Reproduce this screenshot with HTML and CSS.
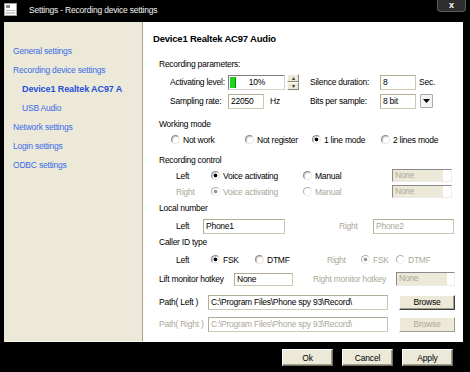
FILE: index.html
```html
<!DOCTYPE html>
<html lang="en">
<head>
  <meta charset="UTF-8">
  <meta name="viewport" content="width=device-width, initial-scale=1.0">
  <title>Settings - Recording device settings</title>
  <link rel="stylesheet" href="styles.css">
</head>
<body>
<div class="window">
  <div class="titlebar">
    <svg class="app-icon" width="13" height="13" viewBox="0 0 13 13">
      <rect x="0.5" y="0.5" width="12" height="12" fill="#fff" stroke="#a0a0a0"/>
      <rect x="2" y="2" width="4" height="3" fill="#8a8a8a"/>
      <rect x="2" y="7" width="9" height="1" fill="#b8b8b8"/>
      <rect x="2" y="9" width="9" height="2" fill="#d0d0d0"/>
    </svg>
    <span class="title">Settings - Recording device settings</span>
    <div class="close-btn">x</div>
  </div>

  <div class="client">
    <ul class="sidebar">
      <li class="nav-item">General settings</li>
      <li class="nav-item">Recording device settings</li>
      <li class="nav-item sub active">Device1 Realtek AC97 A</li>
      <li class="nav-item sub">USB Audio</li>
      <li class="nav-item">Network settings</li>
      <li class="nav-item">Login settings</li>
      <li class="nav-item">ODBC settings</li>
    </ul>

    <div class="panel">
      <div class="panel-title">Device1 Realtek AC97 Audio</div>

      <div class="group-title mt-10">Recording parameters:</div>
      <div class="params-row mt-2">
        <span>Activating level:</span>
        <div class="level-cell">
          <div class="level-box"><span class="level-bar"></span><span class="level-text">10%</span></div>
          <div class="spin">
            <span class="spin-btn">&#9652;</span>
            <span class="spin-btn">&#9662;</span>
          </div>
        </div>
        <span>Silence duration:</span>
        <div class="input">8</div>
        <span class="unit">Sec.</span>
      </div>
      <div class="params-row mt-3">
        <span>Sampling rate:</span>
        <div class="level-cell">
          <div class="input rate">22050</div>
          <span class="unit hz">Hz</span>
        </div>
        <span>Bits per sample:</span>
        <div class="input">8 bit</div>
        <span class="drop-btn"><svg width="7" height="4" viewBox="0 0 7 4"><path d="M0 0h7L3.5 4z" fill="#000"/></svg></span>
      </div>

      <div class="group-title mt-8">Working mode</div>
      <div class="mode-row">
        <label class="opt"><span class="radio"></span>Not work</label>
        <label class="opt"><span class="radio"></span>Not register</label>
        <label class="opt"><span class="radio checked"></span>1 line mode</label>
        <label class="opt"><span class="radio"></span>2 lines mode</label>
      </div>

      <div class="group-title mt-6">Recording control</div>
      <div class="control-row">
        <span>Left</span>
        <label class="opt"><span class="radio checked"></span>Voice activating</label>
        <label class="opt"><span class="radio"></span>Manual</label>
        <div class="key-box"><span class="key-fill">None</span></div>
      </div>
      <div class="control-row mt-1 disabled">
        <span>Right</span>
        <label class="opt"><span class="radio checked"></span>Voice activating</label>
        <label class="opt"><span class="radio"></span>Manual</label>
        <div class="key-box"><span class="key-fill">None</span></div>
      </div>

      <div class="group-title mt-2">Local number</div>
      <div class="number-row mt-2">
        <span>Left</span>
        <div class="input">Phone1</div>
        <span class="right-label disabled">Right</span>
        <div class="input disabled">Phone2</div>
      </div>

      <div class="group-title mt-1">Caller ID type</div>
      <div class="caller-row mt-2">
        <span>Left</span>
        <label class="opt"><span class="radio checked"></span>FSK</label>
        <label class="opt"><span class="radio"></span>DTMF</label>
        <span class="disabled">Right</span>
        <label class="opt disabled"><span class="radio checked"></span>FSK</label>
        <label class="opt disabled"><span class="radio"></span>DTMF</label>
      </div>

      <div class="hotkey-row mt-4">
        <span>Lift monitor hotkey</span>
        <div class="input small">None</div>
        <span class="right-label disabled">Right monitor hotkey</span>
        <div class="key-box tall"><span class="key-fill">None</span></div>
      </div>

      <div class="path-row mt-7">
        <span>Path( Left )</span>
        <div class="input">C:\Program Files\Phone spy 93\Record\</div>
        <button class="btn">Browse</button>
      </div>
      <div class="path-row mt-6 disabled">
        <span>Path( Right )</span>
        <div class="input">C:\Program Files\Phone spy 93\Record\</div>
        <button class="btn">Browse</button>
      </div>
    </div>
  </div>

  <div class="footer">
    <button class="btn footer-btn">Ok</button>
    <button class="btn footer-btn">Cancel</button>
    <button class="btn footer-btn">Apply</button>
  </div>
</div>
</body>
</html>
```

FILE: styles.css
```css
* {
  box-sizing: border-box;
  margin: 0;
  padding: 0;
}

body {
  background-color: #000;
  width: 470px;
  height: 372px;
  overflow: hidden;
  font-family: "Liberation Sans", Arial, sans-serif;
  font-size: 8.5px;
  letter-spacing: -0.25px;
  color: #000;
}

.window {
  width: 470px;
  height: 372px;
  background-color: #000;
}

/* title bar */
.titlebar {
  display: flex;
  height: 22px;
  color: #fff;
}

.app-icon {
  margin: 3px 0 0 4px;
}

.title {
  margin: 4px 0 0 12px;
  font-size: 8.5px;
  letter-spacing: -0.2px;
  line-height: 12px;
  color: #f2f2f2;
}

.close-btn {
  margin-left: auto;
  margin-right: 4px;
  width: 29px;
  height: 12px;
  background-color: #2e2e2e;
  border: 1px solid #5c5c5c;
  border-top: none;
  border-radius: 0 0 4px 4px;
  color: #fff;
  font-weight: bold;
  font-size: 9px;
  letter-spacing: 0;
  line-height: 10px;
  text-align: center;
}

/* main area */
.client {
  display: flex;
  margin-left: 4px;
  width: 459px;
  height: 320px;
}

.sidebar {
  list-style: none;
  width: 139px;
  background-color: #ece9d8;
  border-right: 1px solid #a5a294;
  border-bottom: 1px solid #f7f5ec;
  padding-top: 20px;
  white-space: nowrap;
}

.nav-item {
  height: 19px;
  line-height: 19px;
  padding-left: 9px;
  font-size: 8.5px;
  letter-spacing: -0.2px;
  color: #3a6cea;
}

.nav-item.sub {
  padding-left: 18px;
}

.nav-item.active {
  font-weight: bold;
  font-size: 9px;
  letter-spacing: -0.1px;
  color: #1d4fdc;
}

.panel {
  flex: 1;
  background-color: #fff;
  padding-top: 9px;
  white-space: nowrap;
}

.panel-title {
  height: 16px;
  line-height: 16px;
  padding-left: 10px;
  font-weight: bold;
  font-size: 9.5px;
  letter-spacing: -0.2px;
}

.group-title {
  height: 15px;
  line-height: 15px;
  padding-left: 16px;
}

.mt-1 { margin-top: 1px; }
.mt-2 { margin-top: 2px; }
.mt-3 { margin-top: 3px; }
.mt-4 { margin-top: 4px; }
.mt-6 { margin-top: 6px; }
.mt-7 { margin-top: 7px; }
.mt-8 { margin-top: 8px; }
.mt-10 { margin-top: 10px; }

.disabled,
.disabled .input {
  color: #aca899;
}

/* controls */
.input {
  height: 15px;
  line-height: 13px;
  padding-left: 2px;
  background-color: #fff;
  border: 1px solid #cdc8b2;
  border-top-color: #b3ad94;
  border-left-color: #b3ad94;
  overflow: hidden;
}

.input.small {
  height: 13px;
  line-height: 11px;
}

.unit {
  margin-left: 3px;
}

.level-cell {
  display: flex;
  align-items: center;
}

.level-box {
  width: 57px;
  height: 15px;
  border: 1px solid #7f7f7f;
  border-right-color: #d6d3c6;
  border-bottom-color: #d6d3c6;
  background-color: #fff;
  display: flex;
}

.level-bar {
  width: 6px;
  margin: 1px 0 1px 1px;
  background-color: #1fd41f;
  border-right: 1px solid #0a8a0a;
}

.level-text {
  flex: 1;
  text-align: center;
  line-height: 13px;
  padding-right: 6px;
}

.spin {
  margin-left: 2px;
  display: flex;
  flex-direction: column;
}

.spin-btn {
  width: 12px;
  height: 8px;
  background-color: #ece9d8;
  border: 1px solid;
  border-color: #fff #8a877a #8a877a #fff;
  font-size: 6px;
  line-height: 6px;
  letter-spacing: 0;
  text-align: center;
  color: #333;
}

.input.rate {
  width: 36px;
}

.unit.hz {
  margin-left: 6px;
}

.drop-btn {
  margin-left: 4px;
  width: 13px;
  height: 14px;
  background-color: #f5f5f3;
  border: 1px solid #a9a9a9;
  border-radius: 1px;
  display: flex;
  justify-content: center;
  align-items: center;
}

.radio {
  display: inline-block;
  flex-shrink: 0;
  width: 9px;
  height: 9px;
  border-radius: 50%;
  background-color: #fff;
  border: 1px solid;
  border-color: #8d8d8d #e6e6e6 #e6e6e6 #8d8d8d;
  box-shadow: inset 1px 1px 0 #c8c8c8;
}

.radio.checked {
  background-image: radial-gradient(circle, #000 1.6px, transparent 2.2px);
}

.disabled .radio {
  border-color: #b0b0b0 #eeeeee #eeeeee #b0b0b0;
  box-shadow: none;
}

.disabled .radio.checked {
  background-image: radial-gradient(circle, #9a9a9a 1.6px, transparent 2.2px);
}

.opt {
  display: flex;
  align-items: center;
  gap: 3px;
}

.key-box {
  width: 60px;
  height: 13px;
  display: flex;
  background-color: #fff;
  border: 1px solid;
  border-color: #8a8a8a #ececec #ececec #8a8a8a;
}

.key-box.tall {
  width: 59px;
  height: 14px;
}

.key-fill {
  width: 50px;
  background-color: #ece9d8;
  padding-left: 2px;
  line-height: 11px;
  color: #aca899;
}

.btn {
  font-family: inherit;
  font-size: 8.5px;
  letter-spacing: -0.2px;
  color: #000;
  background-color: #ece9d8;
  border: 1px solid;
  border-color: #fff #404040 #404040 #fff;
  box-shadow: inset -1px -1px 0 #a19e8e;
}

.disabled .btn {
  color: #aca899;
  border-color: #fff #9e9b8c #9e9b8c #fff;
  box-shadow: none;
}

/* rows */
.params-row {
  display: grid;
  grid-template-columns: 58px 82px 70px 36px auto;
  align-items: center;
  height: 16px;
  padding-left: 27px;
}

.params-row .unit:last-child,
.params-row .drop-btn {
  justify-self: start;
}

.mode-row {
  display: grid;
  grid-template-columns: 74px 67px 69px auto;
  align-items: center;
  height: 15px;
  padding-left: 28px;
}

.control-row {
  display: grid;
  grid-template-columns: 35px 92px 89px 60px;
  align-items: center;
  height: 15px;
  padding-left: 33px;
}

.number-row {
  display: grid;
  grid-template-columns: 27px 82px 88px 81px;
  align-items: center;
  height: 16px;
  padding-left: 33px;
}

.number-row .right-label {
  padding-left: 54px;
}

.caller-row {
  display: grid;
  grid-template-columns: 35px 44px 72px 34px 35px auto;
  align-items: center;
  height: 15px;
  padding-left: 33px;
}

.hotkey-row {
  display: grid;
  grid-template-columns: 75px 59px 103px 59px;
  align-items: center;
  height: 16px;
  padding-left: 16px;
}

.hotkey-row .right-label {
  padding-left: 20px;
}

.path-row {
  display: grid;
  grid-template-columns: 49px 180px 67px;
  align-items: center;
  height: 16px;
  padding-left: 16px;
}

.path-row .btn {
  width: 56px;
  height: 15px;
  margin-left: 11px;
  line-height: 11px;
}

/* footer */
.footer {
  display: flex;
  justify-content: flex-end;
  gap: 9px;
  height: 30px;
  padding: 7px 17px 0 0;
}

.footer-btn {
  width: 51px;
  height: 17px;
  border-color: #fff #6f6d62 #6f6d62 #fff;
}
```
